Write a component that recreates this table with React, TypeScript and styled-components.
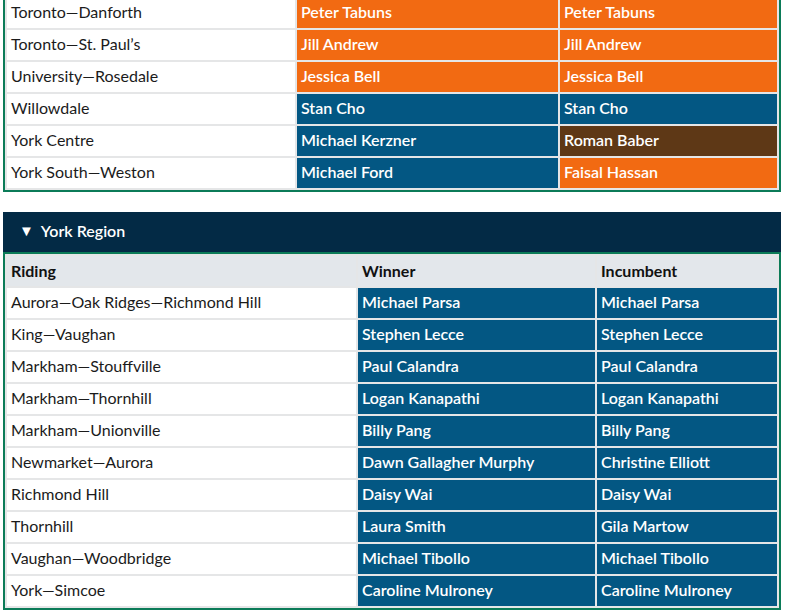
import styled, { createGlobalStyle } from 'styled-components';

type Party = 'pc' | 'ndp' | 'ind';

type Row = {
  riding: string;
  winner: [string, Party];
  incumbent: [string, Party];
};

const toronto: Row[] = [
  { riding: 'Toronto—Danforth', winner: ['Peter Tabuns', 'ndp'], incumbent: ['Peter Tabuns', 'ndp'] },
  { riding: 'Toronto—St. Paul’s', winner: ['Jill Andrew', 'ndp'], incumbent: ['Jill Andrew', 'ndp'] },
  { riding: 'University—Rosedale', winner: ['Jessica Bell', 'ndp'], incumbent: ['Jessica Bell', 'ndp'] },
  { riding: 'Willowdale', winner: ['Stan Cho', 'pc'], incumbent: ['Stan Cho', 'pc'] },
  { riding: 'York Centre', winner: ['Michael Kerzner', 'pc'], incumbent: ['Roman Baber', 'ind'] },
  { riding: 'York South—Weston', winner: ['Michael Ford', 'pc'], incumbent: ['Faisal Hassan', 'ndp'] },
];

const york: Row[] = [
  { riding: 'Aurora—Oak Ridges—Richmond Hill', winner: ['Michael Parsa', 'pc'], incumbent: ['Michael Parsa', 'pc'] },
  { riding: 'King—Vaughan', winner: ['Stephen Lecce', 'pc'], incumbent: ['Stephen Lecce', 'pc'] },
  { riding: 'Markham—Stouffville', winner: ['Paul Calandra', 'pc'], incumbent: ['Paul Calandra', 'pc'] },
  { riding: 'Markham—Thornhill', winner: ['Logan Kanapathi', 'pc'], incumbent: ['Logan Kanapathi', 'pc'] },
  { riding: 'Markham—Unionville', winner: ['Billy Pang', 'pc'], incumbent: ['Billy Pang', 'pc'] },
  { riding: 'Newmarket—Aurora', winner: ['Dawn Gallagher Murphy', 'pc'], incumbent: ['Christine Elliott', 'pc'] },
  { riding: 'Richmond Hill', winner: ['Daisy Wai', 'pc'], incumbent: ['Daisy Wai', 'pc'] },
  { riding: 'Thornhill', winner: ['Laura Smith', 'pc'], incumbent: ['Gila Martow', 'pc'] },
  { riding: 'Vaughan—Woodbridge', winner: ['Michael Tibollo', 'pc'], incumbent: ['Michael Tibollo', 'pc'] },
  { riding: 'York—Simcoe', winner: ['Caroline Mulroney', 'pc'], incumbent: ['Caroline Mulroney', 'pc'] },
];

const partyColors: Record<Party, string> = {
  pc: '#035783',
  ndp: '#f26a12',
  ind: '#5e3816',
};

const GlobalStyle = createGlobalStyle`
  body {
    margin: 0;
    background: #fff;
    font-family: Lato, 'Liberation Sans', sans-serif;
  }
`;

const Page = styled.div`
  width: 778px;
  margin: 0 3px;
`;

const Results = styled.table`
  width: 100%;
  table-layout: fixed;
  border: 2px solid #0b7b58;
  border-spacing: 2px;
  background: #e5e6e7;
  font-size: 16px;
  line-height: 20px;
`;

const TopResults = styled(Results)`
  margin-top: -6px;
`;

const Section = styled.section`
  margin-top: 20px;
`;

const SectionHeader = styled.div`
  height: 40px;
  display: flex;
  align-items: center;
  gap: 7px;
  padding: 0 0 4px 16px;
  box-sizing: border-box;
  background: #032a45;
  color: #fff;
  font-size: 16px;
  font-weight: 600;
`;

const Caret = styled.span`
  font-size: 15px;
  line-height: 1;
`;

const HeadCell = styled.th`
  height: 29px;
  padding: 0 4px 1px;
  background: #e3e7eb;
  color: #111;
  font-weight: 700;
  text-align: left;
`;

const RidingCell = styled.td`
  height: 28px;
  padding: 0 4px 2px;
  background: #fff;
  color: #1b1b1b;
  white-space: nowrap;
`;

const NameCell = styled.td<{ $party: Party }>`
  height: 28px;
  padding: 0 4px 2px;
  background: ${(p) => partyColors[p.$party]};
  color: #fff;
  font-weight: 600;
  white-space: nowrap;
`;

function ResultRows({ rows }: { rows: Row[] }) {
  return (
    <tbody>
      {rows.map((row) => (
        <tr key={row.riding}>
          <RidingCell>{row.riding}</RidingCell>
          <NameCell $party={row.winner[1]}>{row.winner[0]}</NameCell>
          <NameCell $party={row.incumbent[1]}>{row.incumbent[0]}</NameCell>
        </tr>
      ))}
    </tbody>
  );
}

export default function App() {
  return (
    <Page>
      <GlobalStyle />
      <TopResults>
        <colgroup>
          <col style={{ width: 288 }} />
          <col style={{ width: 261 }} />
          <col style={{ width: 217 }} />
        </colgroup>
        <ResultRows rows={toronto} />
      </TopResults>

      <Section>
        <SectionHeader>
          <Caret>▼</Caret>
          York Region
        </SectionHeader>
        <Results>
          <colgroup>
            <col style={{ width: 349 }} />
            <col style={{ width: 237 }} />
            <col style={{ width: 180 }} />
          </colgroup>
          <thead>
            <tr>
              <HeadCell>Riding</HeadCell>
              <HeadCell>Winner</HeadCell>
              <HeadCell>Incumbent</HeadCell>
            </tr>
          </thead>
          <ResultRows rows={york} />
        </Results>
      </Section>
    </Page>
  );
}
